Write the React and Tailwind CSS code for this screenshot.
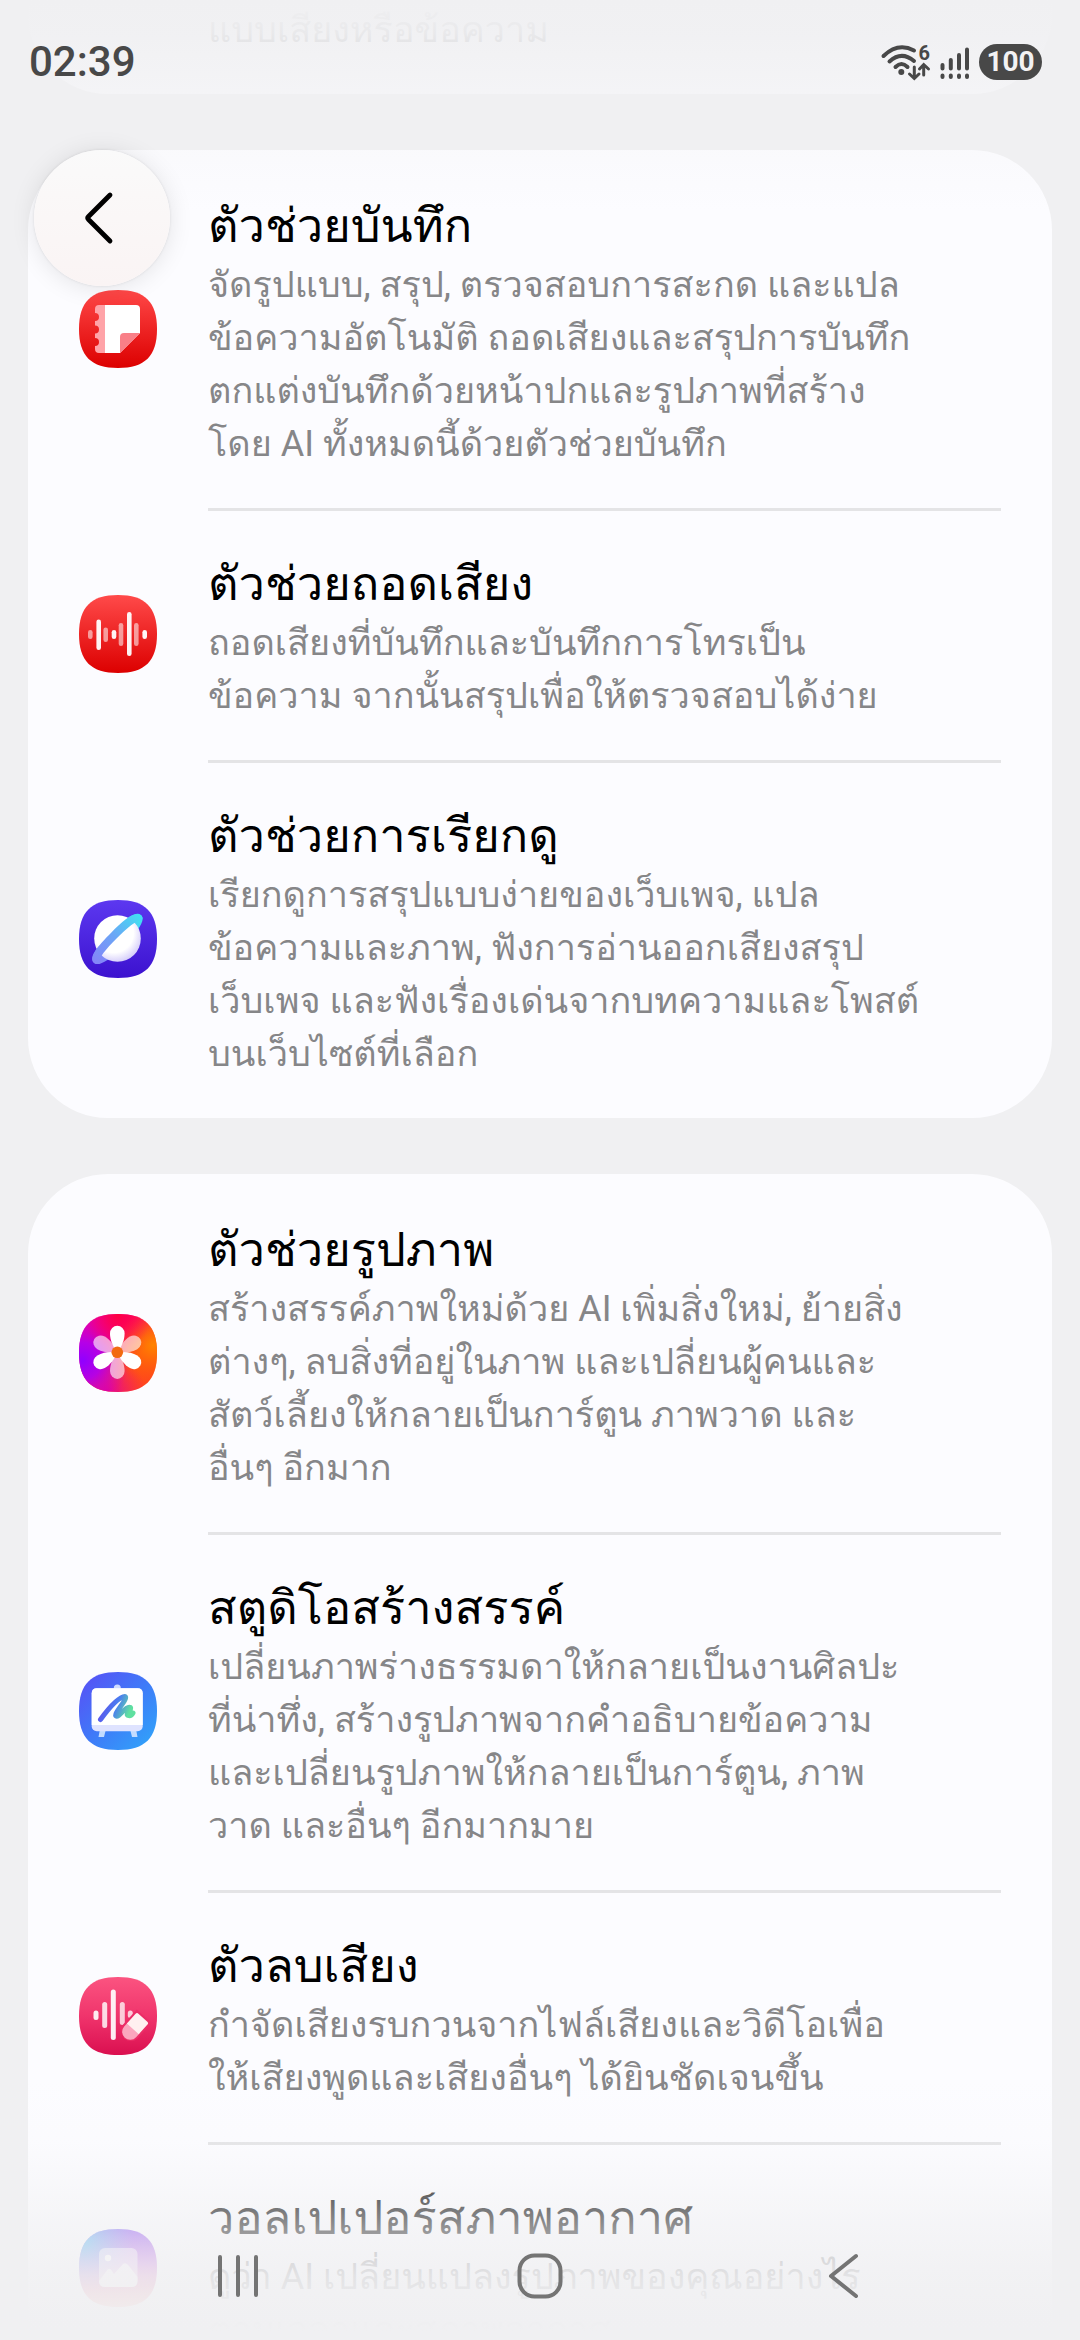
import React from "react";

const SQUIRCLE = "M39 0C66 0 78 12 78 39C78 66 66 78 39 78C12 78 0 66 0 39C0 12 12 0 39 0Z";

function AppIcon({ id, stops, diagonal, children }) {
  return (
    <svg viewBox="0 0 78 78" className="size-[78px] shrink-0" aria-hidden="true">
      <defs>
        <linearGradient id={id} x1="0" y1="0" x2={diagonal ? "1" : "0"} y2="1">
          {stops.map(([offset, color]) => (
            <stop key={offset} offset={offset} stopColor={color} />
          ))}
        </linearGradient>
      </defs>
      <path d={SQUIRCLE} fill={`url(#${id})`} />
      {children}
    </svg>
  );
}

function Bars({ bars, width = 4.6 }) {
  return bars.map(([x, top, bottom, opacity]) => (
    <rect
      key={x}
      x={x - width / 2}
      y={top}
      width={width}
      height={bottom - top}
      rx={width / 2}
      fill="#fff"
      opacity={opacity}
    />
  ));
}

function NotesIcon() {
  return (
    <AppIcon id="notes" stops={[["0", "#ff4848"], ["1", "#dc0000"]]}>
      <path
        d="M20 15H28V63H20Q16 63 16 59V56A4 4 0 0 0 16 48V43.500A4 4 0 0 0 16 35.500V31A4 4 0 0 0 16 23V19Q16 15 20 15Z"
        fill="#ffa3a8"
      />
      <path d="M26 15H57Q61 15 61 19V43L41 63H26Z" fill="#fff" />
      <path d="M61 43H45Q41 43 41 47V63Z" fill="#f98088" />
    </AppIcon>
  );
}

function RecorderIcon() {
  return (
    <AppIcon id="recorder" stops={[["0", "#ff4a4a"], ["1", "#dc0000"]]}>
      <Bars
        bars={[
          [11.3, 35, 44, 0.55],
          [19.7, 24.5, 55, 0.95],
          [26.7, 32.5, 47, 0.55],
          [35, 35, 44, 0.95],
          [42, 28, 51, 0.55],
          [50.3, 17, 61, 0.95],
          [57.3, 28, 51, 0.55],
          [65.7, 35, 44, 0.95],
        ]}
      />
    </AppIcon>
  );
}

function BrowserIcon() {
  return (
    <AppIcon id="browser" stops={[["0", "#5c38f0"], ["1", "#3c12cf"]]}>
      <defs>
        <linearGradient id="ring" x1="0" y1="0" x2="1" y2="0">
          <stop offset="0" stopColor="#8583f8" />
          <stop offset="0.5" stopColor="#6ba6f6" />
          <stop offset="1" stopColor="#40e0f2" />
        </linearGradient>
        <radialGradient id="planet" cx="0.42" cy="0.38" r="0.65">
          <stop offset="0.65" stopColor="#fff" />
          <stop offset="1" stopColor="#d3cbfa" />
        </radialGradient>
      </defs>
      <g transform="rotate(-45 38.500 39)">
        <ellipse cx="38.5" cy="39" rx="30" ry="6" fill="#2a0a9e" stroke="url(#ring)" strokeWidth="7" />
      </g>
      <circle cx="38.5" cy="38.5" r="23.3" fill="url(#planet)" />
      <path
        d="M5 39C5 31 20 30 38.500 30S72 31 72 39Q72 42 69 43C66 39 54 38 38.500 38S11 39 8 43Q5 42 5 39Z"
        transform="rotate(-45 38.500 39)"
        fill="url(#ring)"
      />
    </AppIcon>
  );
}

function GalleryIcon() {
  const petal = "M38.300 38C34 33 31 26 31 19.500A7.300 7.800 0 0 1 45.600 19.500C45.600 26 42.600 33 38.300 38Z";
  return (
    <AppIcon
      id="gallery"
      diagonal
      stops={[["0", "#d800d0"], ["0.35", "#f8006c"], ["0.65", "#ff5018"], ["1", "#ff4020"]]}
    >
      <defs>
        <radialGradient id="violet" cx="0.05" cy="0.6" r="0.6">
          <stop offset="0" stopColor="#9000ff" />
          <stop offset="0.4" stopColor="#b000f0" stopOpacity="0.9" />
          <stop offset="1" stopColor="#d800c0" stopOpacity="0" />
        </radialGradient>
        <radialGradient id="amber" cx="0.95" cy="0.4" r="0.5">
          <stop offset="0" stopColor="#ff8400" />
          <stop offset="1" stopColor="#ff6000" stopOpacity="0" />
        </radialGradient>
        <radialGradient id="rose" cx="0.5" cy="0" r="0.45">
          <stop offset="0" stopColor="#ff0040" />
          <stop offset="1" stopColor="#ff0060" stopOpacity="0" />
        </radialGradient>
        <radialGradient id="magenta" cx="0.35" cy="1" r="0.5">
          <stop offset="0" stopColor="#e000a0" />
          <stop offset="1" stopColor="#f00080" stopOpacity="0" />
        </radialGradient>
      </defs>
      <path d={SQUIRCLE} fill="url(#magenta)" />
      <path d={SQUIRCLE} fill="url(#violet)" />
      <path d={SQUIRCLE} fill="url(#amber)" />
      <path d={SQUIRCLE} fill="url(#rose)" />
      <g fill="#fff" opacity="0.62">
        <path d={petal} transform="rotate(60 38.300 38.300)" />
        <path d={petal} transform="rotate(180 38.300 38.300)" />
        <path d={petal} transform="rotate(300 38.300 38.300)" />
      </g>
      <g fill="#fff">
        <path d={petal} />
        <path d={petal} transform="rotate(120 38.300 38.300)" />
        <path d={petal} transform="rotate(240 38.300 38.300)" />
      </g>
      <circle cx="38.3" cy="38.3" r="5.8" fill="#f26a10" />
    </AppIcon>
  );
}

function StudioIcon() {
  return (
    <AppIcon id="studio" diagonal stops={[["0", "#5a4cf5"], ["0.5", "#3f7af8"], ["1", "#2ea8fa"]]}>
      <defs>
        <linearGradient id="scribble" x1="0" y1="0" x2="1" y2="0.3">
          <stop offset="0" stopColor="#6444ea" />
          <stop offset="0.55" stopColor="#4a7cf0" />
          <stop offset="1" stopColor="#5fe0a0" />
        </linearGradient>
      </defs>
      <circle cx="38.3" cy="16" r="3.5" fill="#cfdcff" />
      <path d="M21 57H27L25 65H19.500ZM51 57H57L58.500 65H53Z" fill="#c3dcff" />
      <rect x="12.700" y="16.300" width="51" height="43" rx="5" fill="#dfe3ff" />
      <path d="M17.700 16.300H58.700Q63.700 16.300 63.700 21.300V53H12.700V21.300Q12.700 16.300 17.700 16.300Z" fill="#fff" />
      <path
        d="M21.500 47.500C27 40 38 25 46 24.500C50 26 34 42 37 44C40 46 47 33 51.500 35.500C53 38 46 42 49 43.500Q52 44.500 54 41"
        fill="none"
        stroke="url(#scribble)"
        strokeWidth="5"
        strokeLinecap="round"
        strokeLinejoin="round"
      />
    </AppIcon>
  );
}

function EraserIcon() {
  return (
    <AppIcon id="eraser" stops={[["0", "#fb5480"], ["0.5", "#f0346c"], ["1", "#da0f50"]]}>
      <Bars
        width={5}
        bars={[
          [17, 33.5, 43, 0.9],
          [25.7, 25, 51, 0.82],
          [34.3, 12.5, 63, 0.92],
          [43.3, 25, 48, 0.75],
          [51.3, 33.5, 41, 0.75],
        ]}
      />
      <g transform="rotate(-48 55.500 50)">
        <path d="M45 40H70V60H49A10 10 0 0 1 40 50Z" fill="#ec2c66" />
        <path d="M49 42H54V58H49A8 8 0 0 1 49 42Z" fill="#fba6be" />
        <path d="M53 42H66Q68 42 68 44V56Q68 58 66 58H53Z" fill="#fff0f0" />
      </g>
    </AppIcon>
  );
}

function WallpaperIcon() {
  return (
    <AppIcon id="weather" stops={[["0", "#8a4cf5"], ["0.45", "#c060dc"], ["1", "#ff7060"]]}>
      <defs>
        <radialGradient id="sky" cx="0.05" cy="0.15" r="0.65">
          <stop offset="0" stopColor="#40b8f0" />
          <stop offset="1" stopColor="#60a0f0" stopOpacity="0" />
        </radialGradient>
      </defs>
      <path d={SQUIRCLE} fill="url(#sky)" />
      <rect x="20" y="19" width="38.500" height="39" rx="6" fill="#fff" opacity="0.55" />
      <circle cx="29" cy="29" r="3.200" fill="#fff" />
      <path d="M20 52L29 40Q31 39 33 42L35 45L44 35Q47 33 50 37L58.500 48V52Q58.500 58 52.500 58H26Q20 58 20 52Z" fill="#fff" opacity="0.8" />
    </AppIcon>
  );
}

const groups = [
  [
    {
      icon: NotesIcon,
      title: "ตัวช่วยบันทึก",
      lines: [
        "จัดรูปแบบ, สรุป, ตรวจสอบการสะกด และแปล",
        "ข้อความอัตโนมัติ ถอดเสียงและสรุปการบันทึก",
        "ตกแต่งบันทึกด้วยหน้าปกและรูปภาพที่สร้าง",
        "โดย AI ทั้งหมดนี้ด้วยตัวช่วยบันทึก",
      ],
    },
    {
      icon: RecorderIcon,
      title: "ตัวช่วยถอดเสียง",
      lines: ["ถอดเสียงที่บันทึกและบันทึกการโทรเป็น", "ข้อความ จากนั้นสรุปเพื่อให้ตรวจสอบได้ง่าย"],
    },
    {
      icon: BrowserIcon,
      title: "ตัวช่วยการเรียกดู",
      lines: [
        "เรียกดูการสรุปแบบง่ายของเว็บเพจ, แปล",
        "ข้อความและภาพ, ฟังการอ่านออกเสียงสรุป",
        "เว็บเพจ และฟังเรื่องเด่นจากบทความและโพสต์",
        "บนเว็บไซต์ที่เลือก",
      ],
    },
  ],
  [
    {
      icon: GalleryIcon,
      title: "ตัวช่วยรูปภาพ",
      lines: [
        "สร้างสรรค์ภาพใหม่ด้วย AI เพิ่มสิ่งใหม่, ย้ายสิ่ง",
        "ต่างๆ, ลบสิ่งที่อยู่ในภาพ และเปลี่ยนผู้คนและ",
        "สัตว์เลี้ยงให้กลายเป็นการ์ตูน ภาพวาด และ",
        "อื่นๆ อีกมาก",
      ],
    },
    {
      icon: StudioIcon,
      title: "สตูดิโอสร้างสรรค์",
      lines: [
        "เปลี่ยนภาพร่างธรรมดาให้กลายเป็นงานศิลปะ",
        "ที่น่าทึ่ง, สร้างรูปภาพจากคำอธิบายข้อความ",
        "และเปลี่ยนรูปภาพให้กลายเป็นการ์ตูน, ภาพ",
        "วาด และอื่นๆ อีกมากมาย",
      ],
    },
    {
      icon: EraserIcon,
      title: "ตัวลบเสียง",
      lines: ["กำจัดเสียงรบกวนจากไฟล์เสียงและวิดีโอเพื่อ", "ให้เสียงพูดและเสียงอื่นๆ ได้ยินชัดเจนขึ้น"],
    },
    {
      icon: WallpaperIcon,
      title: "วอลเปเปอร์สภาพอากาศ",
      lines: ["ดูว่า AI เปลี่ยนแปลงรูปภาพของคุณอย่างไร", "ตามเวลาและสภาพอากาศ"],
    },
  ],
];

function FeatureRow({ icon: Icon, title, lines }) {
  return (
    <li className="group flex items-center gap-[51px] px-[51px]">
      <Icon />
      <div className="min-w-0 flex-1 border-t-[3px] border-[#e4e4e6] pt-[40px] pb-[37px] group-first:border-transparent">
        <h2 className="text-[47px] leading-[66px] whitespace-nowrap text-black">{title}</h2>
        <p className="text-[36px] leading-[53px] whitespace-nowrap text-[#868688]">
          {lines.map((line) => (
            <span key={line} className="block">
              {line}
            </span>
          ))}
        </p>
      </div>
    </li>
  );
}

function StatusBar() {
  return (
    <header className="flex items-center justify-between pt-[40px] pr-[38px] pl-[29px] font-[Roboto] text-[#484848]">
      <time className="text-[42px] leading-[44px] font-medium">02:39</time>
      <div className="flex items-center">
        <svg viewBox="0 0 52 38" className="h-[38px] w-[52px] overflow-visible" fill="none" stroke="currentColor" strokeWidth="4" strokeLinecap="round" role="img" aria-label="Wi-Fi 6">
          <path d="M3.500 13Q18 -1 34 7.500M9.500 18.500Q21.500 7.500 34 18M15.500 24Q21.500 18 27.500 24" />
          <circle cx="21.300" cy="29" r="3" fill="currentColor" stroke="none" />
          <path d="M34.300 24V35M29.500 31L34.300 35.500L39 31M43.700 32V21.500M39.500 26L43.700 21.500L48.500 26" strokeWidth="3" />
          <text x="38.500" y="17" fontSize="20" fontWeight="700" fill="currentColor" stroke="none">
            6
          </text>
        </svg>
        <svg viewBox="0 0 30 34" className="ml-[8px] h-[34px] w-[30px]" stroke="currentColor" strokeWidth="4" strokeLinecap="round" role="img" aria-label="Signal">
          <path d="M2.500 20V23.500M10.800 15V23.500M19 10V23.500M27 4.500V23.500M2.500 30.500V32M10.800 30.500V32M19 30.500V32M27 30.500V32" />
        </svg>
        <span className="ml-[9px] flex h-[36px] w-[63px] items-center justify-center rounded-full bg-[#484848] text-[28px] leading-none font-bold text-[#f2f2f3]">
          100
        </span>
      </div>
    </header>
  );
}

function NavigationBar() {
  const button = "flex h-[64px] items-center justify-center text-[#747474]";
  return (
    <nav className="grid grid-cols-3 px-[87px] pb-[32px]">
      <button type="button" aria-label="Recents" className={button}>
        <svg viewBox="0 0 48 48" className="size-[48px]" fill="none" stroke="currentColor" strokeWidth="4" strokeLinecap="round">
          <path d="M6 5V43M24 5V43M42 5V43" />
        </svg>
      </button>
      <button type="button" aria-label="Home" className={button}>
        <svg viewBox="0 0 48 48" className="size-[48px]" fill="none" stroke="currentColor" strokeWidth="4">
          <rect x="3.500" y="3.500" width="41" height="41" rx="15" />
        </svg>
      </button>
      <button type="button" aria-label="Back" className={button}>
        <svg viewBox="0 0 48 48" className="size-[48px]" fill="none" stroke="currentColor" strokeWidth="4" strokeLinecap="round" strokeLinejoin="round">
          <path d="M38 4L13 24L38 44" />
        </svg>
      </button>
    </nav>
  );
}

export default function App() {
  return (
    <div className="relative h-screen overflow-hidden bg-[#f0f0f2] font-[Roboto,Loma,sans-serif]">
      <main className="flex flex-col gap-[56px] px-[28px]">
        <section className="rounded-b-[80px] bg-[#fcfcff] px-[180px] pt-[4px] pb-[37px]">
          <p className="text-[36px] leading-[53px] whitespace-nowrap text-[#868688]">แบบเสียงหรือข้อความ</p>
        </section>
        {groups.map((rows, index) => (
          <ul key={index} className="rounded-[80px] bg-[#fcfcff]">
            {rows.map((row) => (
              <FeatureRow key={row.title} {...row} />
            ))}
          </ul>
        ))}
      </main>

      <div className="absolute inset-x-0 top-0 h-[210px] bg-[linear-gradient(to_bottom,#f0f0f2_0%,#f0f0f2ee_16%,#f0f0f2b0_42%,#f0f0f230_72%,#f0f0f200_100%)]">
        <StatusBar />
      </div>

      <button
        type="button"
        aria-label="Navigate up"
        className="absolute top-[150px] left-[34px] flex size-[136px] items-center justify-center rounded-full bg-linear-to-b from-[#fafafa] to-[#faf4f4] shadow-[0_2px_24px_rgba(0,0,0,0.10),0_0_3px_rgba(0,0,0,0.10)]"
      >
        <svg viewBox="0 0 56 56" className="size-[56px]" fill="none" stroke="#000" strokeWidth="4.800" strokeLinecap="round" strokeLinejoin="round">
          <path d="M36 5L14.500 26.500Q13 28 14.500 29.500L36 51" />
        </svg>
      </button>

      <div className="absolute inset-x-0 bottom-0 flex h-[260px] flex-col justify-end bg-[linear-gradient(to_bottom,#f0f0f200_0%,#f0f0f218_24%,#f0f0f268_44%,#f0f0f2a8_60%,#f0f0f2de_75%,#f0f0f2fa_90%,#f0f0f2_97%)]">
        <NavigationBar />
      </div>
    </div>
  );
}
